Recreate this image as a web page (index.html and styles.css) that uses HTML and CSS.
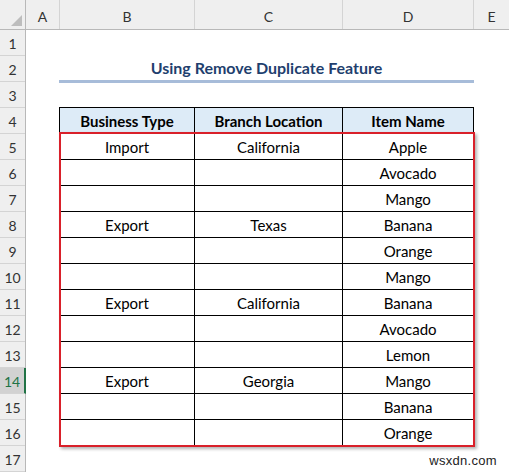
FILE: index.html
```html
<!DOCTYPE html>
<html>
<head>
<meta charset="utf-8">
<link rel="stylesheet" href="styles.css">
</head>
<body>
<div class="sheet">
  <div class="colhead">
    <div class="corner"><svg width="25" height="29" viewBox="0 0 25 29"><polygon points="22,15 22,26 11,26" fill="#bdbdbd"/></svg></div>
    <div class="ch ca">A</div>
    <div class="ch cb">B</div>
    <div class="ch cc">C</div>
    <div class="ch cd">D</div>
    <div class="ch ce">E</div>
  </div>
  <div class="body">
    <div class="rowheads">
      <div class="rh">1</div><div class="rh">2</div><div class="rh">3</div><div class="rh">4</div>
      <div class="rh">5</div><div class="rh">6</div><div class="rh">7</div><div class="rh">8</div>
      <div class="rh">9</div><div class="rh">10</div><div class="rh">11</div><div class="rh">12</div>
      <div class="rh">13</div><div class="rh sel">14</div><div class="rh">15</div><div class="rh">16</div>
      <div class="rh">17</div>
    </div>
    <div class="content">
      <div class="title-block"><span class="title">Using Remove Duplicate Feature</span></div>
      <div class="tbl">
        <div class="cell hd">Business Type</div><div class="cell hd">Branch Location</div><div class="cell hd">Item Name</div>
        <div class="cell">Import</div><div class="cell">California</div><div class="cell">Apple</div>
        <div class="cell"></div><div class="cell"></div><div class="cell">Avocado</div>
        <div class="cell"></div><div class="cell"></div><div class="cell">Mango</div>
        <div class="cell">Export</div><div class="cell">Texas</div><div class="cell">Banana</div>
        <div class="cell"></div><div class="cell"></div><div class="cell">Orange</div>
        <div class="cell"></div><div class="cell"></div><div class="cell">Mango</div>
        <div class="cell">Export</div><div class="cell">California</div><div class="cell">Banana</div>
        <div class="cell"></div><div class="cell"></div><div class="cell">Avocado</div>
        <div class="cell"></div><div class="cell"></div><div class="cell">Lemon</div>
        <div class="cell">Export</div><div class="cell">Georgia</div><div class="cell">Mango</div>
        <div class="cell"></div><div class="cell"></div><div class="cell">Banana</div>
        <div class="cell"></div><div class="cell"></div><div class="cell">Orange</div>
      </div>
    </div>
  </div>
  <div class="redbox"></div>
  <div class="watermark">wsxdn.com</div>
</div>
</body>
</html>
```
FILE: styles.css
```css
* { box-sizing: border-box; }
html, body { margin: 0; padding: 0; background: #fff; }
.sheet {
  position: relative;
  width: 509px;
  height: 472px;
  overflow: hidden;
  background: #fff;
  font-family: Lato, "Liberation Sans", sans-serif;
  color: #000;
}
.colhead {
  display: flex;
  height: 30px;
  background: #efefef;
  border-bottom: 1px solid #b8b8b8;
}
.corner {
  width: 26px;
  flex: none;
  border-right: 1px solid #b8b8b8;
}
.corner svg { display: block; }
.ch {
  flex: none;
  display: flex;
  align-items: flex-end;
  justify-content: center;
  padding-bottom: 4px;
  font-size: 14px;
  color: #333;
  border-right: 1px solid #d4d4d4;
}
.ca { width: 34px; }
.cb { width: 135px; }
.cc { width: 148px; }
.cd { width: 131px; }
.ce { flex: 1; border-right: none; }
.body { display: flex; }
.rowheads {
  width: 26px;
  flex: none;
  background: #efefef;
  border-right: 1px solid #b8b8b8;
}
.rh {
  height: 26px;
  border-bottom: 1px solid #d4d4d4;
  display: flex;
  align-items: flex-end;
  justify-content: center;
  padding-bottom: 3px;
  font-size: 14px;
  color: #333;
}
.rh.sel {
  background: #d2d2d2;
  color: #217346;
  margin-right: -1px;
  border-right: 2px solid #217346;
}
.content { flex: 1; }
.title-block {
  margin-left: 33px;
  width: 415px;
  height: 53px;
  border-bottom: 3px solid #a7bcd9;
  display: flex;
  align-items: flex-end;
  justify-content: center;
  padding-bottom: 3px;
  margin-bottom: 24px;
}
.title {
  font-weight: bold;
  font-size: 16px;
  color: #1f3f6e;
}
.tbl {
  margin-left: 33px;
  width: 415px;
  display: grid;
  grid-template-columns: 135px 148px 131px;
  border-left: 1px solid #000;
  border-top: 1px solid #000;
}
.cell {
  height: 26px;
  border-right: 1px solid #000;
  border-bottom: 1px solid #000;
  display: flex;
  align-items: center;
  justify-content: center;
  font-size: 15px;
  padding-top: 0;
}
.cell.hd {
  background: #ddebf7;
  font-weight: bold;
}
.redbox {
  position: absolute;
  left: 59px;
  top: 132px;
  width: 416px;
  height: 315px;
  border: 2px solid #d9202a;
  box-shadow: 2px 2px 3px rgba(0,0,0,0.3);
  pointer-events: none;
}
.watermark {
  position: absolute;
  right: 12px;
  bottom: 4px;
  font-family: "Liberation Sans", Arial, sans-serif;
  font-size: 13px;
  letter-spacing: 0.3px;
  color: #222;
}
```
